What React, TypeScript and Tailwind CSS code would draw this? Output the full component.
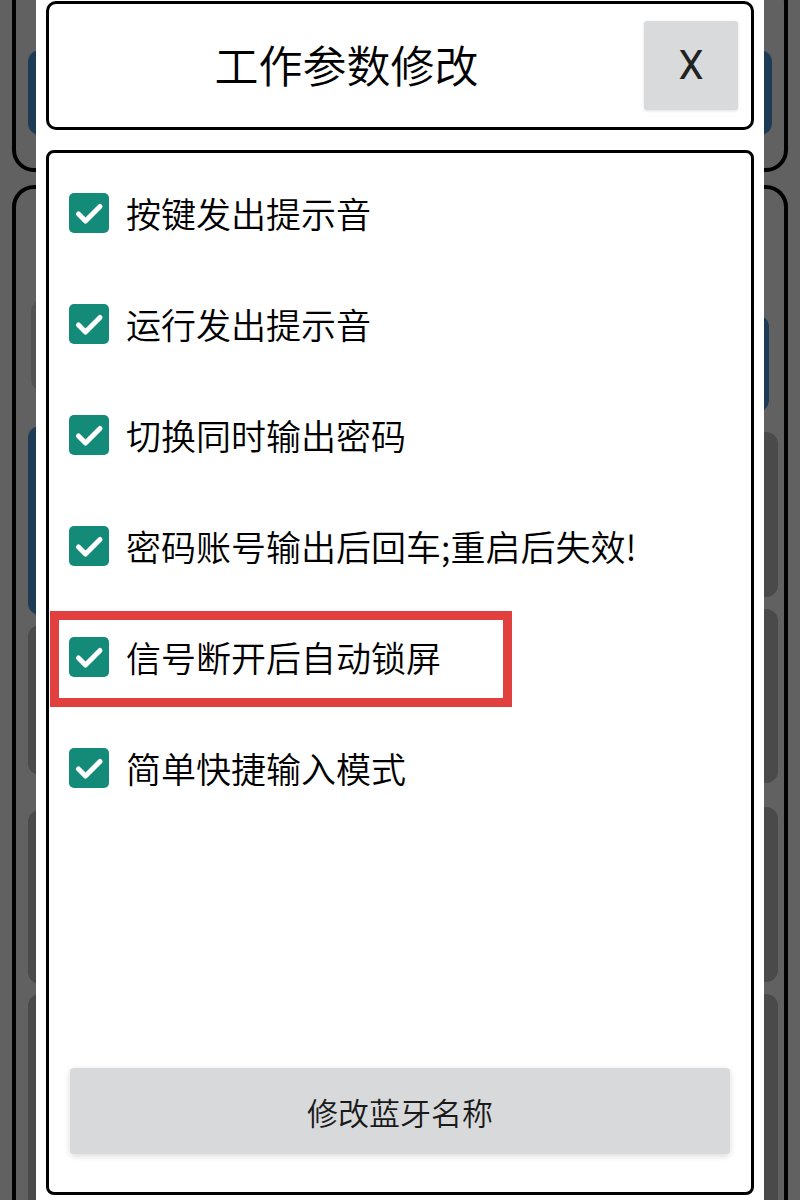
const options = [
  "按键发出提示音",
  "运行发出提示音",
  "切换同时输出密码",
  "密码账号输出后回车;重启后失效!",
  "信号断开后自动锁屏",
  "简单快捷输入模式",
];

const CheckBox = () => (
  <div className="w-[40px] h-[40px] rounded-[5px] bg-[#148a78] flex items-center justify-center shrink-0">
    <svg width="40" height="40" viewBox="0 0 40 40" fill="none">
      <path
        d="M9.5 21 L16.5 28 L31 13.5"
        stroke="#fff"
        strokeWidth="5"
        strokeLinecap="round"
        strokeLinejoin="round"
      />
    </svg>
  </div>
);

// the dimmed page that sits behind the dialog
const BackPage = () => (
  <div className="flex flex-col px-3">
    <div className="-mt-5 h-[192px] border-4 border-black rounded-[22px] px-3 pt-[66px]">
      <div className="h-[85px] rounded-[12px] bg-[#1d3a56]" />
    </div>
    <div className="mt-[13px] h-[1100px] border-4 border-black border-b-0 rounded-t-[22px] px-3 flex gap-3">
      <div className="flex-1 flex flex-col gap-[10px] pt-[111px]">
        <div className="h-[94px] rounded-[12px] bg-[#545454] ml-[3px]" />
        <div className="mt-[25px] h-[195px] rounded-[12px] bg-[#1d3a56]" />
        <div className="h-[155px] rounded-[12px] bg-[#4a4a4a]" />
        <div className="mt-[25px] h-[180px] rounded-[12px] bg-[#4a4a4a]" />
        <div className="h-[300px] rounded-[12px] bg-[#4a4a4a]" />
      </div>
      <div className="flex-1 flex flex-col gap-[12px] pt-[126px]">
        <div className="h-[100px] rounded-[12px] bg-[#1d3a56] mr-[3px]" />
        <div className="mt-[8px] h-[170px] rounded-[12px] bg-[#4a4a4a] -mr-[6px]" />
        <div className="h-[180px] rounded-[12px] bg-[#4a4a4a] -mr-[6px]" />
        <div className="mt-[12px] h-[180px] rounded-[12px] bg-[#4a4a4a] -mr-[6px]" />
        <div className="h-[300px] rounded-[12px] bg-[#4a4a4a] -mr-[6px]" />
      </div>
    </div>
  </div>
);

export default function App() {
  return (
    <div
      className="relative w-[800px] h-[1200px] overflow-hidden bg-[#616161] font-[350]"
      style={{ fontFamily: '"Noto Sans CJK SC", "Noto Sans", sans-serif' }}
    >
      <BackPage />

      {/* Dialog */}
      <div className="absolute top-0 bottom-0 left-[36px] w-[728px] bg-white px-[10px] pt-[1px] flex flex-col">
        {/* Header */}
        <div className="h-[129px] border-[3px] border-black rounded-[10px] flex items-center">
          <div className="flex-1 text-center text-[44px] text-black leading-none -mt-[4px]">
            工作参数修改
          </div>
          <button className="w-[94px] h-[89px] mr-[13px] bg-[#d9dadb] rounded-[3px] shadow-[0_1px_3px_rgba(0,0,0,0.12)] flex items-center justify-center">
            <span
              className="text-[40px] text-[#222] leading-none font-normal"
              style={{ fontFamily: "Roboto, sans-serif" }}
            >
              X
            </span>
          </button>
        </div>

        {/* Options */}
        <div className="mt-[20px] h-[1045px] border-[3px] border-black rounded-[8px] flex flex-col pt-[4px]">
          {options.map((label, i) => (
            <div key={label} className="relative h-[111px] flex items-center pl-[20px]">
              <CheckBox />
              <span className="ml-[17px] text-[35px] text-black leading-none whitespace-nowrap">
                {label}
              </span>
              {i === 4 && (
                <div className="absolute left-[1px] top-[10px] w-[462px] h-[96px] border-[9px] border-[#e23f3f]" />
              )}
            </div>
          ))}

          <button className="mt-auto mx-[21px] mb-[38px] h-[86px] bg-[#d8d9da] rounded-[4px] shadow-[0_2px_6px_rgba(0,0,0,0.15)] flex items-center justify-center">
            <span className="text-[31px] text-[#1a1a1a] leading-none">修改蓝牙名称</span>
          </button>
        </div>
      </div>
    </div>
  );
}
